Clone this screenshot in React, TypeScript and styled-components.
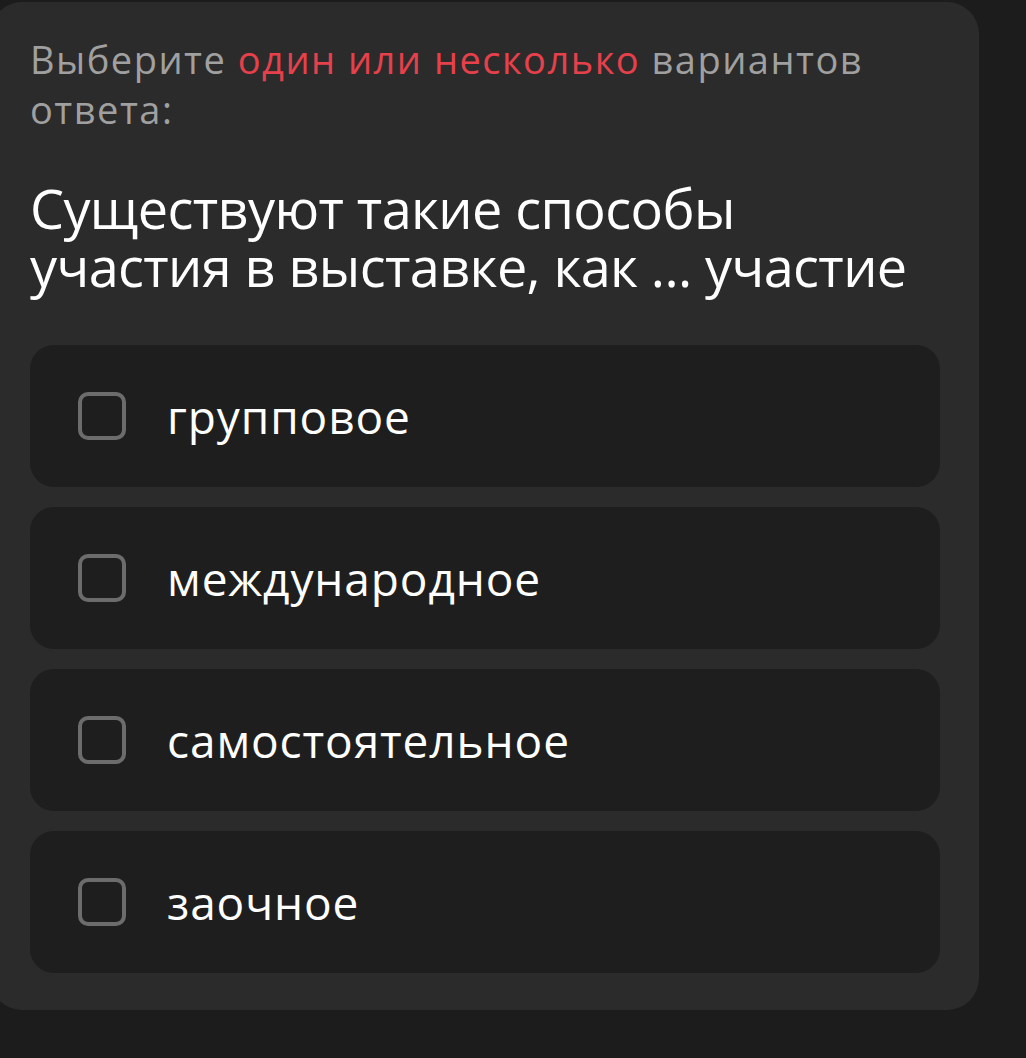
import React from "react";
import styled, { createGlobalStyle } from "styled-components";

const GlobalStyle = createGlobalStyle`
  html, body {
    margin: 0;
    padding: 0;
    background: #1c1c1c;
  }
  body {
    font-family: "Open Sans", "Noto Sans", sans-serif;
    overflow: hidden;
  }
  * { box-sizing: border-box; }
`;

const Page = styled.div`
  width: 1026px;
  height: 1058px;
  background: #1c1c1c;
  padding-top: 2px;
`;

const Card = styled.section`
  margin-left: -10px;
  width: 989px;
  height: 1008px;
  background: #2b2b2b;
  border-radius: 32px;
  padding: 32px 39px 36px 40px;
  display: flex;
  flex-direction: column;
`;

const Hint = styled.p`
  margin: 0;
  font-size: 38px;
  line-height: 50px;
  letter-spacing: 1.5px;
  font-weight: 400;
  color: #a0a0a0;
`;

const Accent = styled.span`
  color: #e6404b;
`;

const Question = styled.h2`
  margin: 45px 0 0;
  font-size: 54px;
  line-height: 58px;
  letter-spacing: -0.6px;
  font-weight: 400;
  color: #ffffff;
`;

const Options = styled.div`
  margin-top: 50px;
  display: flex;
  flex-direction: column;
  gap: 20px;
`;

const Option = styled.label`
  height: 142px;
  border-radius: 24px;
  background: #1e1e1e;
  display: flex;
  align-items: center;
  padding-left: 48px;
  gap: 41px;
  cursor: pointer;
`;

const Box = styled.span`
  flex: none;
  width: 48px;
  height: 48px;
  border: 4px solid #6c6c6c;
  border-radius: 10px;
`;

const OptionText = styled.span`
  font-size: 46px;
  line-height: 1;
  letter-spacing: 0.9px;
  color: #ffffff;
  font-weight: 400;
`;

const answers = ["групповое", "международное", "самостоятельное", "заочное"];

export default function App() {
  return (
    <>
      <GlobalStyle />
      <Page>
        <Card>
          <Hint>
            Выберите <Accent>один или несколько</Accent> вариантов ответа:
          </Hint>
          <Question>Существуют такие способы участия в выставке, как ... участие</Question>
          <Options>
            {answers.map((a) => (
              <Option key={a}>
                <Box />
                <OptionText>{a}</OptionText>
              </Option>
            ))}
          </Options>
        </Card>
      </Page>
    </>
  );
}
